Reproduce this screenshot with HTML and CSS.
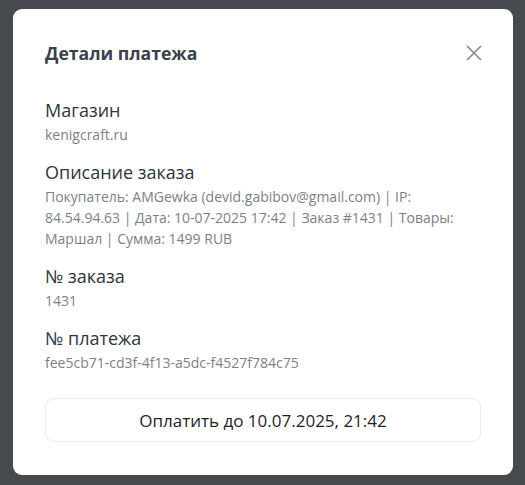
FILE: index.html
```html
<!DOCTYPE html>
<html lang="ru">
<head>
<meta charset="utf-8">
<link rel="stylesheet" href="styles.css">
</head>
<body>
<div class="backdrop">
  <div class="modal">
    <div class="header">
      <h2 class="title">Детали платежа</h2>
      <button class="close" aria-label="Закрыть">
        <svg width="16" height="16" viewBox="0 0 16 16"><path d="M1 1 L15 15 M15 1 L1 15" stroke="#85888d" stroke-width="1.6" fill="none"/></svg>
      </button>
    </div>
    <div class="fields">
      <div class="field">
        <div class="label">Магазин</div>
        <div class="value">kenigcraft.ru</div>
      </div>
      <div class="field">
        <div class="label">Описание заказа</div>
        <div class="value">Покупатель: AMGewka (devid.gabibov@gmail.com) | IP: 84.54.94.63 | Дата: 10-07-2025 17:42 | Заказ #1431 | Товары: Маршал | Сумма: 1499 RUB</div>
      </div>
      <div class="field">
        <div class="label">№ заказа</div>
        <div class="value">1431</div>
      </div>
      <div class="field">
        <div class="label">№ платежа</div>
        <div class="value">fee5cb71-cd3f-4f13-a5dc-f4527f784c75</div>
      </div>
    </div>
    <button class="pay">Оплатить до 10.07.2025, 21:42</button>
  </div>
</div>
</body>
</html>
```
FILE: styles.css
```css
* { box-sizing: border-box; }
html, body { margin: 0; padding: 0; }
body {
  font-family: "Open Sans", "Noto Sans", sans-serif;
  background: #46494e;
  width: 525px;
  height: 485px;
  overflow: hidden;
}
.backdrop {
  padding: 9px 12px 0 13px;
  height: 485px;
}
.modal {
  width: 500px;
  height: 466px;
  background: #ffffff;
  border-radius: 9px;
  padding: 32px 32px 32px 32px;
  display: flex;
  flex-direction: column;
}
.header {
  display: flex;
  justify-content: space-between;
  align-items: center;
  height: 24px;
  flex-shrink: 0;
}
.title {
  margin: 0;
  font-size: 17.6px;
  line-height: 24px;
  font-weight: 700;
  color: #3a414c;
}
.close {
  border: 0;
  background: none;
  padding: 0;
  margin-right: -1px;
  width: 16px;
  height: 16px;
  display: flex;
}
.fields {
  margin-top: 33px;
  display: flex;
  flex-direction: column;
  gap: 15px;
  flex-shrink: 0;
}
.field {
  display: flex;
  flex-direction: column;
  gap: 2px;
}
.label {
  font-size: 18px;
  line-height: 24px;
  color: #2f3540;
}
.value {
  font-size: 14px;
  line-height: 21px;
  color: #7c8189;
}
.pay {
  margin-top: 25px;
  height: 44px;
  flex-shrink: 0;
  width: 100%;
  border: 1px solid #e9ebef;
  border-radius: 9px;
  background: #ffffff;
  font-family: "Open Sans", "Noto Sans", sans-serif;
  font-size: 17px;
  color: #1f2329;
}
```
